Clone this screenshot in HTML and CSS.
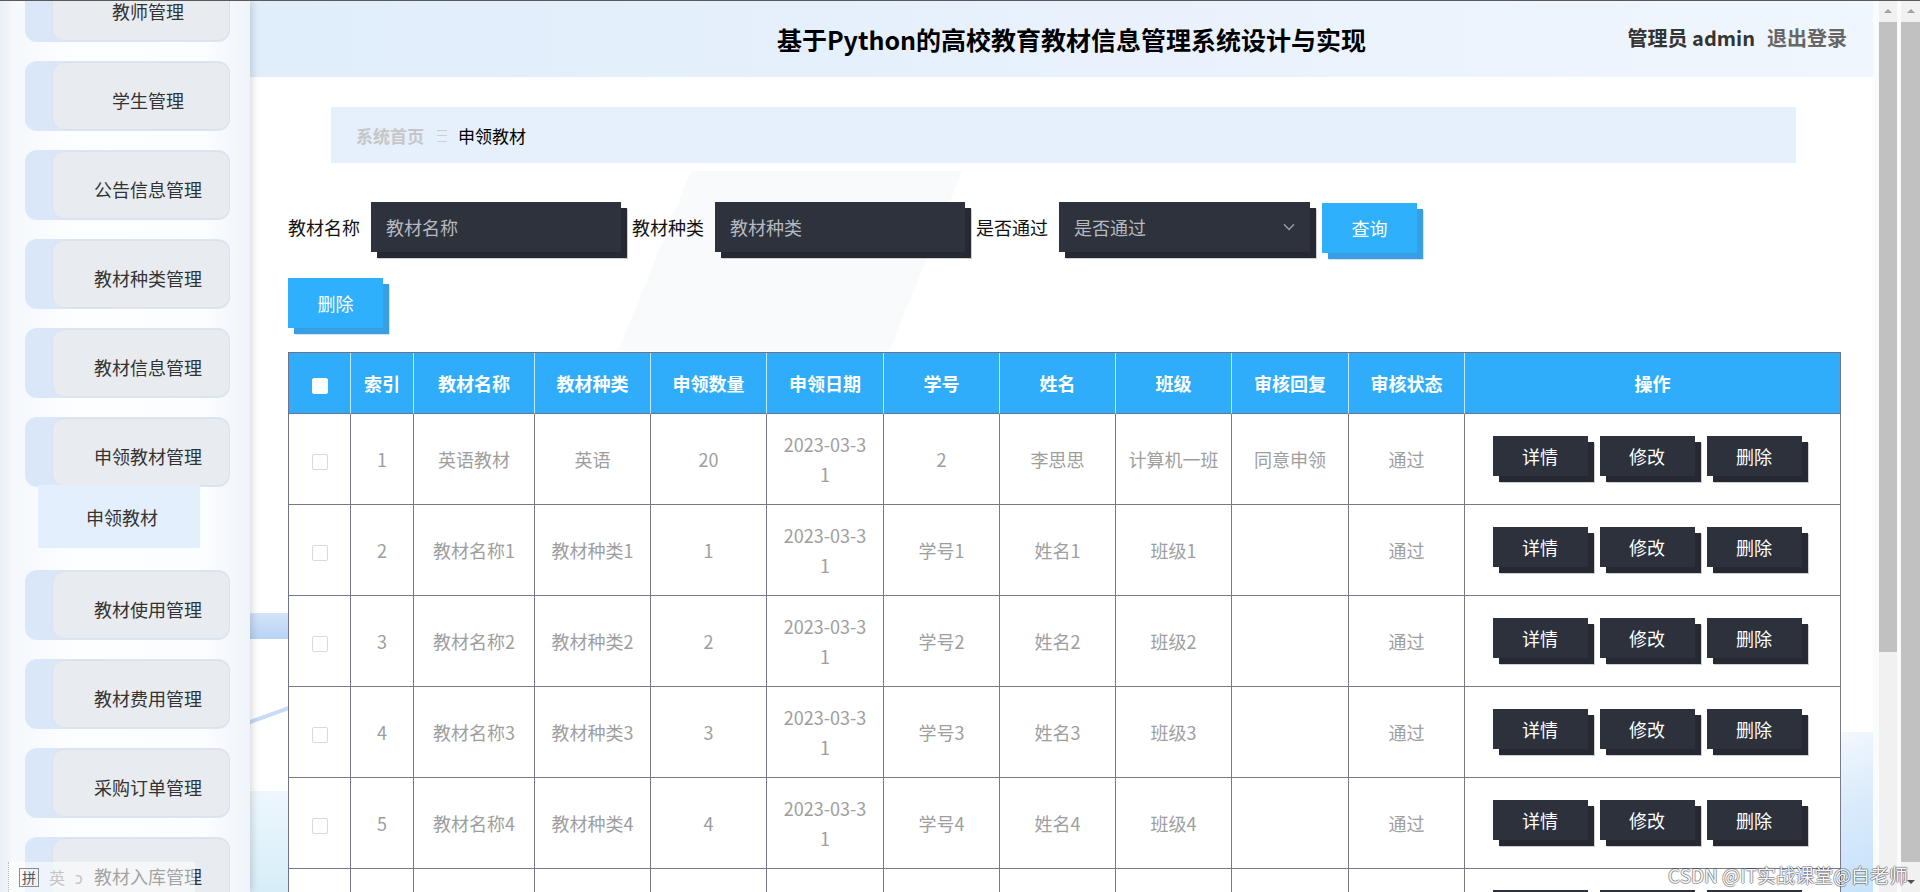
FILE: index.html
```html
<!DOCTYPE html>
<html lang="zh-CN">
<head>
<meta charset="utf-8">
<title>申领教材</title>
<link rel="stylesheet" href="styles.css">
</head>
<body>
<div class="app">
  <aside class="sidebar">
    <nav class="menu">
      <div class="item"><div class="item-inner">教师管理</div></div>
      <div class="item"><div class="item-inner">学生管理</div></div>
      <div class="item"><div class="item-inner">公告信息管理</div></div>
      <div class="item"><div class="item-inner">教材种类管理</div></div>
      <div class="item"><div class="item-inner">教材信息管理</div></div>
      <div class="item open"><div class="item-inner">申领教材管理</div></div>
      <div class="sub">申领教材</div>
      <div class="item"><div class="item-inner">教材使用管理</div></div>
      <div class="item"><div class="item-inner">教材费用管理</div></div>
      <div class="item"><div class="item-inner">采购订单管理</div></div>
      <div class="item"><div class="item-inner">教材入库管理</div></div>
    </nav>
    <div class="ime"><span class="ime-box">拼</span><span class="ime-en">英</span><span class="ime-moon">ↄ</span></div>
  </aside>

  <main class="main">
    <header class="topbar">
      <h1 class="title">基于Python的高校教育教材信息管理系统设计与实现</h1>
      <div class="user"><span class="user-name">管理员 admin</span><span class="logout">退出登录</span></div>
    </header>

    <div class="content">
      <div class="breadcrumb">
        <span class="crumb-home">系统首页</span>
        <span class="crumb-sep"></span>
        <span class="crumb-cur">申领教材</span>
      </div>

      <form class="search">
        <label class="lbl">教材名称</label>
        <input class="field" type="text" placeholder="教材名称">
        <label class="lbl">教材种类</label>
        <input class="field" type="text" placeholder="教材种类">
        <label class="lbl">是否通过</label>
        <div class="field select"><span>是否通过</span>
          <svg class="chev" width="12" height="8" viewBox="0 0 12 8"><path d="M1 1.2 L6 6.5 L11 1.2" fill="none" stroke="#9c9fa6" stroke-width="1.3"/></svg>
        </div>
        <button type="button" class="btn-blue">查询</button>
      </form>

      <div class="actions">
        <button type="button" class="btn-blue">删除</button>
      </div>

      <table class="grid">
        <colgroup>
          <col style="width:62px"><col style="width:63px"><col style="width:121px"><col style="width:116px">
          <col style="width:116px"><col style="width:117px"><col style="width:116px"><col style="width:116px">
          <col style="width:116px"><col style="width:117px"><col style="width:116px"><col style="width:376px">
        </colgroup>
        <thead>
          <tr>
            <th><span class="cb cb-head"></span></th>
            <th>索引</th><th>教材名称</th><th>教材种类</th><th>申领数量</th><th>申领日期</th>
            <th>学号</th><th>姓名</th><th>班级</th><th>审核回复</th><th>审核状态</th><th class="last">操作</th>
          </tr>
        </thead>
        <tbody>
          <tr>
            <td><span class="cb"></span></td><td>1</td><td>英语教材</td><td>英语</td><td>20</td>
            <td><span class="date">2023-03-31</span></td><td>2</td><td>李思思</td><td>计算机一班</td><td>同意申领</td><td>通过</td>
            <td class="last"><div class="ops"><button type="button" class="btn-dark">详情</button><button type="button" class="btn-dark">修改</button><button type="button" class="btn-dark">删除</button></div></td>
          </tr>
          <tr>
            <td><span class="cb"></span></td><td>2</td><td>教材名称1</td><td>教材种类1</td><td>1</td>
            <td><span class="date">2023-03-31</span></td><td>学号1</td><td>姓名1</td><td>班级1</td><td></td><td>通过</td>
            <td class="last"><div class="ops"><button type="button" class="btn-dark">详情</button><button type="button" class="btn-dark">修改</button><button type="button" class="btn-dark">删除</button></div></td>
          </tr>
          <tr>
            <td><span class="cb"></span></td><td>3</td><td>教材名称2</td><td>教材种类2</td><td>2</td>
            <td><span class="date">2023-03-31</span></td><td>学号2</td><td>姓名2</td><td>班级2</td><td></td><td>通过</td>
            <td class="last"><div class="ops"><button type="button" class="btn-dark">详情</button><button type="button" class="btn-dark">修改</button><button type="button" class="btn-dark">删除</button></div></td>
          </tr>
          <tr>
            <td><span class="cb"></span></td><td>4</td><td>教材名称3</td><td>教材种类3</td><td>3</td>
            <td><span class="date">2023-03-31</span></td><td>学号3</td><td>姓名3</td><td>班级3</td><td></td><td>通过</td>
            <td class="last"><div class="ops"><button type="button" class="btn-dark">详情</button><button type="button" class="btn-dark">修改</button><button type="button" class="btn-dark">删除</button></div></td>
          </tr>
          <tr>
            <td><span class="cb"></span></td><td>5</td><td>教材名称4</td><td>教材种类4</td><td>4</td>
            <td><span class="date">2023-03-31</span></td><td>学号4</td><td>姓名4</td><td>班级4</td><td></td><td>通过</td>
            <td class="last"><div class="ops"><button type="button" class="btn-dark">详情</button><button type="button" class="btn-dark">修改</button><button type="button" class="btn-dark">删除</button></div></td>
          </tr>
          <tr class="partial">
            <td></td><td></td><td></td><td></td><td></td><td></td><td></td><td></td><td></td><td></td><td></td>
            <td class="last"><div class="ops ops-top"><span class="btn-dark stub"></span><span class="btn-dark stub"></span><span class="btn-dark stub"></span></div></td>
          </tr>
        </tbody>
      </table>
    </div>
  </main>

  <div class="scrolls">
    <div class="sbar sbar-1"><span class="arr up"></span><span class="thumb"></span></div>
    <div class="sbar sbar-2"><span class="arr up"></span><span class="thumb"></span><span class="arr down"></span></div>
  </div>

  <div class="watermark">CSDN @IT实战课堂@白老师</div>
</div>
</body>
</html>
```
FILE: styles.css
```css
* { box-sizing: border-box; }
html, body { margin: 0; height: 100%; }
body {
  font-family: "Noto Sans CJK SC", "Noto Sans", sans-serif;
  overflow: hidden;
  background: #fff;
  color: #333;
}
.app {
  position: relative;
  display: flex;
  height: 892px;
  border-top: 1px solid #5a5a5a;
  overflow: hidden;
}

/* ---------- sidebar ---------- */
.sidebar {
  width: 250px;
  flex: none;
  position: relative;
  z-index: 2;
  overflow: hidden;
  background: linear-gradient(to right, #e8eff7 0, #f5f8fc 13px, #fdfeff 30%, #fbfdff 82%, #eff4fa 100%);
  box-shadow: 2px 0 8px rgba(0, 0, 0, .16);
}
.menu {
  padding-left: 25px;
  margin-top: -29px;
}
.item {
  width: 205px;
  height: 70px;
  border-radius: 12px;
  background: #dae7f8;
  padding: 1px 0 1px 27px;
  margin-bottom: 19px;
}
.item-inner {
  height: 100%;
  border: 1px solid #dde2e8;
  border-radius: 12px;
  background: #e8ecf0;
  display: flex;
  align-items: center;
  justify-content: center;
  padding: 7px 0 0 14px;
  font-size: 18px;
  line-height: 20px;
  color: #333;
}
.item.open { margin-bottom: 0; }
.sub {
  width: 162px;
  height: 63px;
  margin: -2px 0 22px 13px;
  background: #e3effc;
  display: flex;
  align-items: center;
  justify-content: center;
  padding-left: 6px;
  font-size: 18px;
  color: #333;
}
.ime {
  position: absolute;
  left: 8px;
  bottom: 0;
  width: 187px;
  height: 30px;
  display: flex;
  align-items: center;
  gap: 10px;
  padding-left: 10px;
  border-left: 1px dotted #b9b9b9;
  background: rgba(255, 255, 255, .55);
  color: #9a9a9a;
  font-size: 16px;
}
.ime-box {
  border: 1px solid #8c8c8c;
  color: #555;
  font-size: 14px;
  line-height: 17px;
  padding: 0 2px;
}
.ime-en { color: #c4c4c4; }
.ime-moon { color: #c4c4c4; }

/* ---------- main ---------- */
.main {
  flex: 1;
  min-width: 0;
  display: flex;
  flex-direction: column;
  background:
    linear-gradient(#d2e4fa, #b9d3f4) 0 612px / 38px 26px no-repeat,
    linear-gradient(160deg, transparent 46%, #c7dbf6 47%, #c7dbf6 51%, transparent 52%) 0 680px / 38px 70px no-repeat,
    linear-gradient(#eef7fc, #d6eef8) 0 790px / 38px 102px no-repeat,
    linear-gradient(155deg, #f3f8fd 0, #d9ebfb 45%, #c6e2fa 100%) right 0 bottom 0 / 33px 160px no-repeat,
    linear-gradient(112deg, #fff 0 26%, #f9fafb 26% 42%, #fff 42%) 0 170px / 100% 180px no-repeat,
    #fff;
}
.topbar {
  height: 76px;
  flex: none;
  display: grid;
  grid-template-columns: 1fr auto 1fr;
  align-items: center;
  padding-left: 20px;
  background: linear-gradient(to right, #e0edfb, #e8f1fc 50%, #f0f6fd);
}
.title {
  grid-column: 2;
  margin: 0;
  font-size: 25px;
  font-weight: 700;
  color: #000;
}
.user {
  grid-column: 3;
  justify-self: end;
  margin: -3px 26px 0 0;
  display: flex;
  gap: 12px;
  font-size: 20px;
  font-weight: 700;
}
.user-name { color: #333; }
.logout { color: #666; }

.content {
  padding: 30px 0 0 38px;
}
.breadcrumb {
  margin-left: 43px;
  width: 1465px;
  height: 56px;
  background: #e5f0fc;
  display: flex;
  align-items: center;
  padding-left: 25px;
  font-size: 17px;
}
.crumb-home { color: #c6c6c6; font-weight: 700; }
.crumb-sep {
  width: 10px;
  height: 12px;
  margin: 2px 11px 0 13px;
  background: linear-gradient(to bottom, #cfcfcf 0 1px, transparent 1px 5px, #cfcfcf 5px 6px, transparent 6px 11px, #cfcfcf 11px 12px);
}
.crumb-cur { color: #000; }

.search {
  display: flex;
  align-items: center;
  margin: 39px 0 0;
  height: 50px;
  font-size: 18px;
}
.lbl {
  color: #111;
  margin-right: 11px;
  white-space: nowrap;
}
.field {
  width: 250px;
  height: 50px;
  flex: none;
  border: 0;
  outline: 0;
  margin: 0 11px 0 0;
  padding: 0 15px;
  background: #2e323d;
  box-shadow: 6px 6px 0 #262931, 7px 7px 0 #cfd0d3;
  color: #b6b9bf;
  font-family: inherit;
  font-size: 18px;
}
.field::placeholder { color: #b6b9bf; }
.select {
  width: 251px;
  display: flex;
  align-items: center;
  justify-content: space-between;
  margin-right: 12px;
}
.btn-blue {
  width: 95px;
  height: 50px;
  border: 0;
  padding: 0;
  background: #2fb0fd;
  box-shadow: 6px 6px 0 #379fe2, 7px 7px 0 #d6e3ee;
  color: #fff;
  font-family: inherit;
  font-size: 18px;
}
.search .btn-blue { margin: 2px 0 0 0; }
.actions {
  margin-top: 26px;
  height: 50px;
}

/* ---------- table ---------- */
.grid {
  margin-top: 24px;
  width: 1552px;
  table-layout: fixed;
  border-collapse: separate;
  border-spacing: 0;
  border-top: 1px solid #6e7389;
  border-left: 1px solid #6e7389;
  font-size: 18px;
}
.grid th {
  height: 61px;
  padding: 0;
  background: #2fadfb;
  color: #fff;
  font-weight: 700;
  border-right: 1px solid #c2ebff;
  border-bottom: 1px solid #6e7389;
}
.grid th.last { border-right-color: #6e7389; }
.grid td {
  height: 91px;
  padding: 0 6px;
  text-align: center;
  color: #9e9e9e;
  line-height: 30px;
  border-right: 1px solid #767a89;
  border-bottom: 1px solid #767a89;
  background: rgba(255, 255, 255, .92);
}
.grid tr.partial td { vertical-align: top; }
.cb {
  display: inline-block;
  width: 16px;
  height: 16px;
  border-radius: 2px;
  background: #fff;
  border: 1px solid #dadada;
  vertical-align: middle;
}
.cb-head { border-color: #fff; }
.date {
  display: inline-block;
  width: 88px;
  word-break: break-all;
  vertical-align: middle;
}
.ops {
  display: flex;
  justify-content: center;
  padding: 0 0 6px 1px;
}
.ops-top { padding-top: 21px; }
.btn-dark {
  width: 95px;
  height: 40px;
  margin-right: 12px;
  border: 0;
  padding: 0;
  background: #2d313c;
  box-shadow: 6px 6px 0 #262931, 7px 7px 0 #cdced2;
  color: #fff;
  font-family: inherit;
  font-size: 18px;
}
.stub { display: block; flex: none; }

.watermark {
  position: absolute;
  right: 12px;
  bottom: 5px;
  font-size: 19px;
  line-height: 24px;
  color: #f6f6f6;
  text-shadow: 1px 0 0 rgba(0, 0, 0, .35), -1px 0 0 rgba(0, 0, 0, .35), 0 1px 0 rgba(0, 0, 0, .35), 0 -1px 0 rgba(0, 0, 0, .35);
  white-space: nowrap;
  z-index: 5;
}

/* ---------- scrollbars ---------- */
.scrolls {
  width: 47px;
  flex: none;
  display: flex;
  gap: 4px;
  padding-left: 6px;
  background: #fafbfd;
}
.sbar {
  width: 18px;
  display: flex;
  flex-direction: column;
  align-items: center;
  background: #f1f1f1;
}
.sbar-2 { width: 19px; }
.arr {
  width: 0;
  height: 0;
  border-left: 4px solid transparent;
  border-right: 4px solid transparent;
  flex: none;
}
.arr.up {
  border-bottom: 4px solid #a3a3a3;
  margin: 8px 0 9px;
}
.arr.down {
  border-top: 4px solid #505050;
  margin-top: auto;
  margin-bottom: 8px;
}
.thumb {
  width: 100%;
  background: #c1c1c1;
  flex: none;
}
.sbar-1 .thumb { height: 630px; }
.sbar-2 .thumb { height: 840px; }
```
